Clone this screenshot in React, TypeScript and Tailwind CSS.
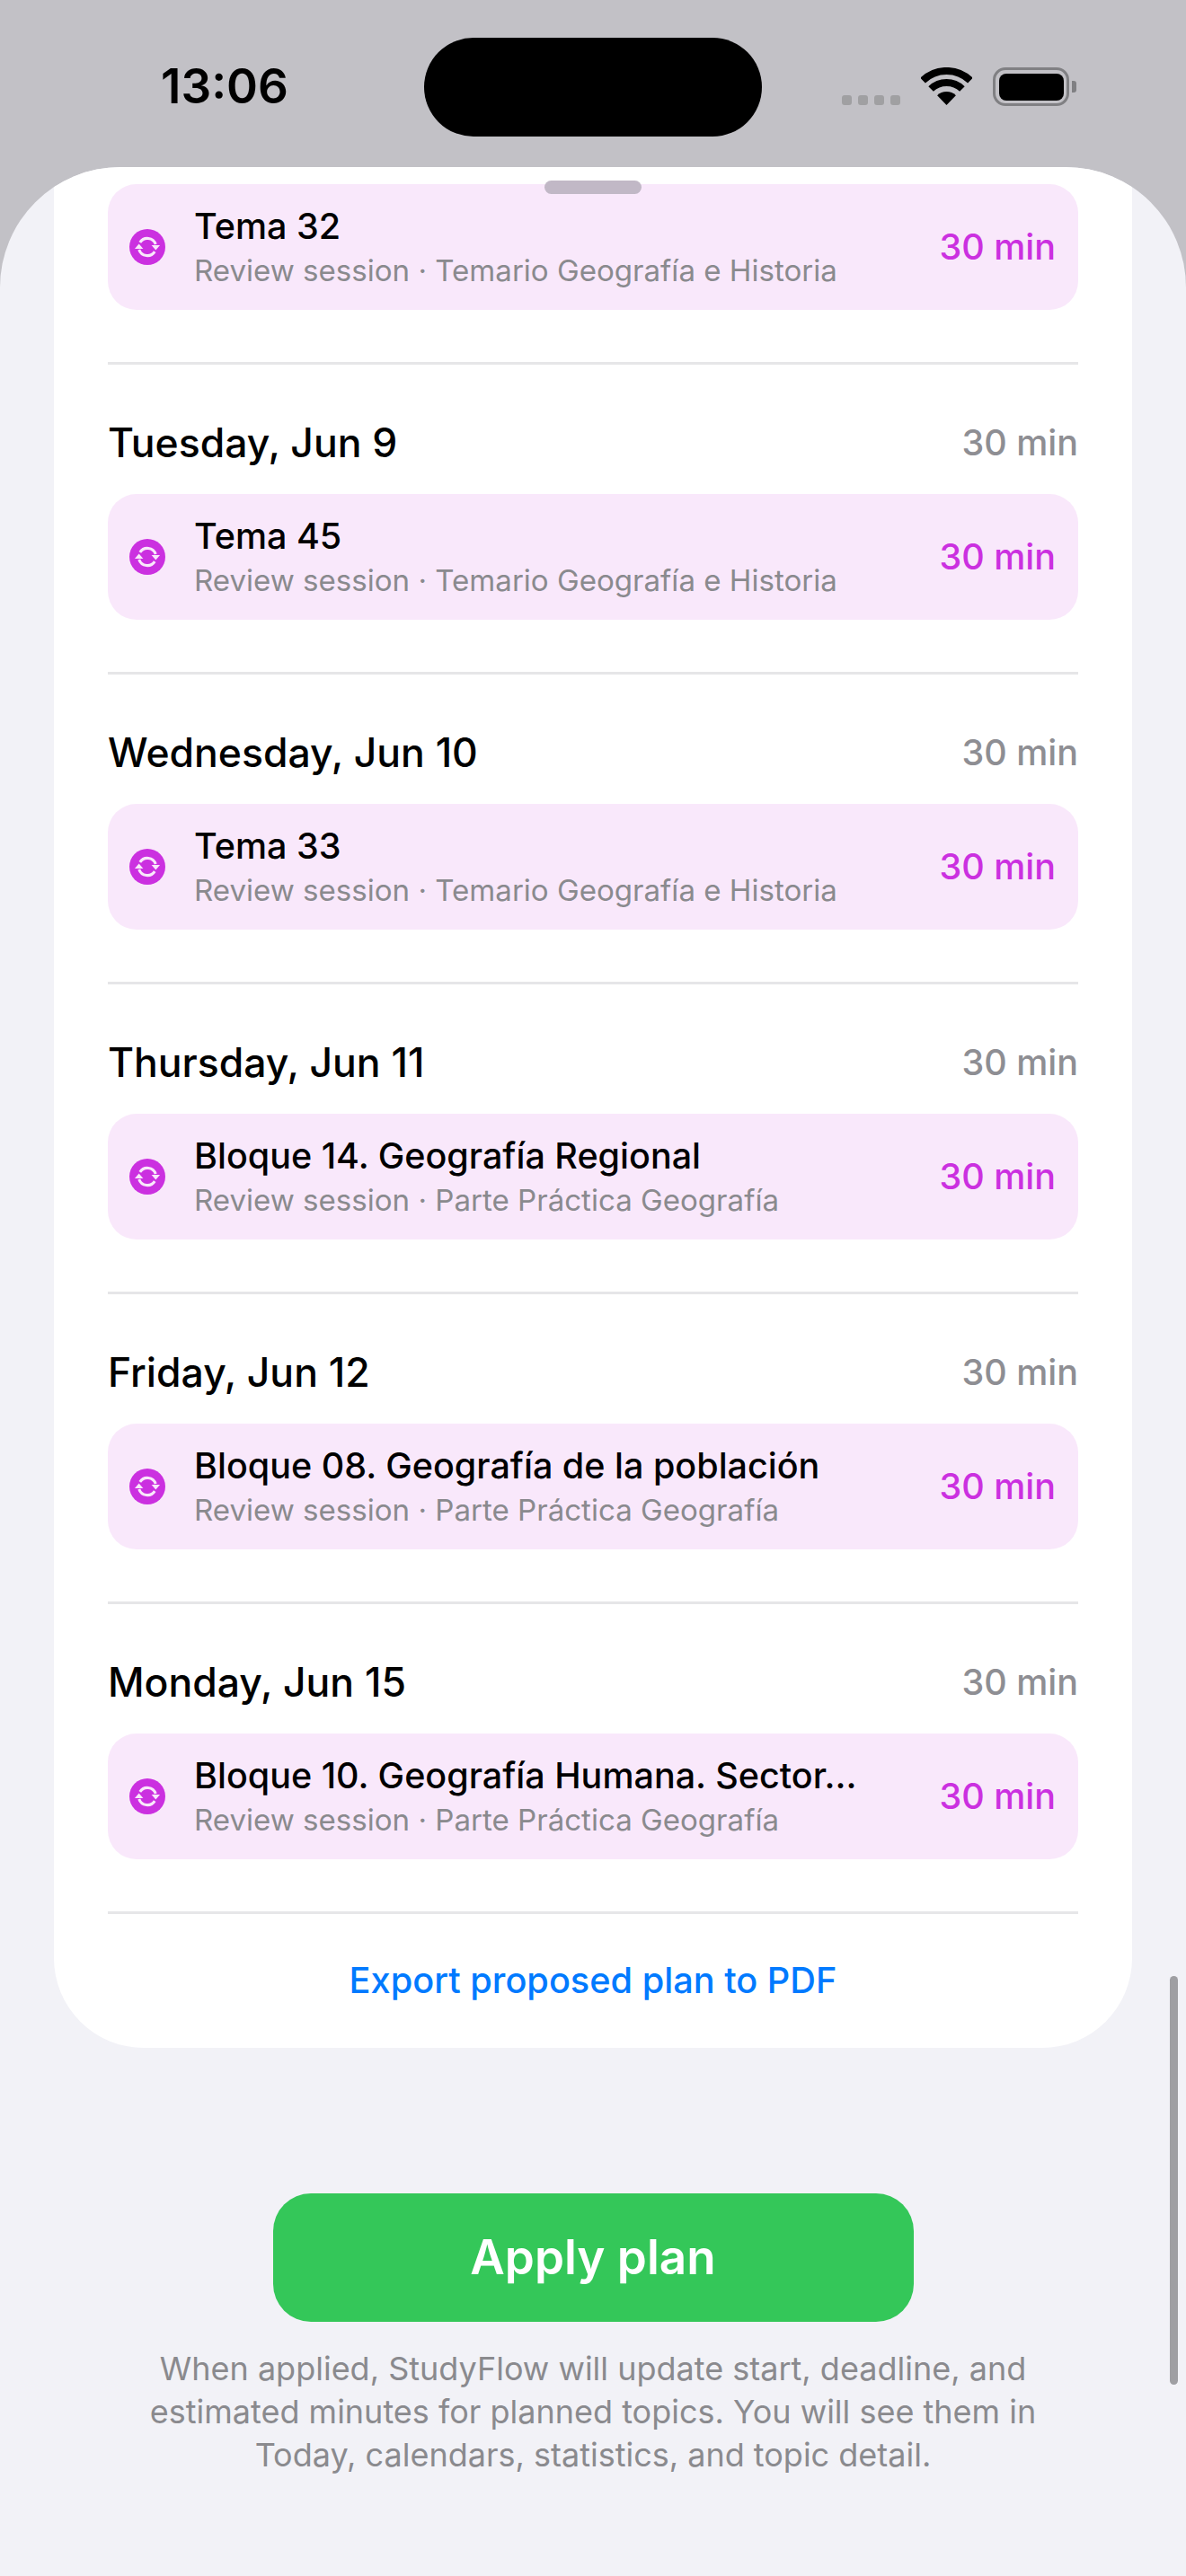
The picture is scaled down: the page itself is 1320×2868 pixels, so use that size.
const days = [
  { day: 'Tuesday, Jun 9', title: 'Tema 45', sub: 'Review session · Temario Geografía e Historia' },
  { day: 'Wednesday, Jun 10', title: 'Tema 33', sub: 'Review session · Temario Geografía e Historia' },
  { day: 'Thursday, Jun 11', title: 'Bloque 14. Geografía Regional', sub: 'Review session · Parte Práctica Geografía' },
  { day: 'Friday, Jun 12', title: 'Bloque 08. Geografía de la población', sub: 'Review session · Parte Práctica Geografía' },
  { day: 'Monday, Jun 15', title: 'Bloque 10. Geografía Humana. Sector...', sub: 'Review session · Parte Práctica Geografía' },
];

function ReviewIcon() {
  return (
    <svg width="40" height="40" viewBox="0 0 39 39" className="shrink-0">
      <circle cx="19.5" cy="19.5" r="19.5" fill="#cb30e0" />
      <g fill="none" stroke="#f9e8fb" strokeWidth="3">
        <path d="M11.5 14.5A9.5 9.5 0 0 1 28.5 16.5" />
        <path d="M27.5 24.5A9.5 9.5 0 0 1 10.5 22.5" />
      </g>
      <path d="M24 17.5H33.2L28.6 23Z" fill="#f9e8fb" />
      <path d="M5.8 21.5H15L10.4 16Z" fill="#f9e8fb" />
    </svg>
  );
}

function Session({ title, sub }: { title: string; sub: string }) {
  return (
    <div className="flex h-[140px] items-center rounded-[32px] bg-[#f9e8fb] pl-[24px] pr-[25px]">
      <ReviewIcon />
      <div className="ml-[32px] min-w-0 flex-1 pt-[2px]">
        <div className="h-[50px] truncate text-[39.5px] leading-[50px] font-medium text-black">{title}</div>
        <div className="h-[48px] truncate text-[33.1px] leading-[48px] text-[#8a8a8e]">{sub}</div>
      </div>
      <div className="ml-4 shrink-0 pt-[2px] text-[39.5px] font-medium text-[#cb30e0]">30 min</div>
    </div>
  );
}

function WifiIcon() {
  return (
    <svg width="57" height="42" viewBox="0 0 57 42">
      <g fill="none" stroke="#000" strokeWidth="8">
        <path d="M2.1 14.6A38 38 0 0 1 54.9 14.6" />
        <path d="M11.1 24A25 25 0 0 1 45.9 24" />
      </g>
      <path d="M28.5 42L18.1 31.2A15 15 0 0 1 38.9 31.2Z" fill="#000" />
    </svg>
  );
}

function StatusBar() {
  return (
    <div className="flex h-[186px] items-start pt-[42px]">
      <div className="ml-[179px] flex h-[110px] w-[293px] items-center text-[53px] font-semibold text-black">13:06</div>
      <div className="h-[110px] w-[376px] rounded-[55px] bg-black" />
      <div className="ml-[89px] mt-[64px] flex gap-[7px]">
        <div className="h-[11px] w-[11px] rounded-[3px] bg-[#a0a0a2]" />
        <div className="h-[11px] w-[11px] rounded-[3px] bg-[#a0a0a2]" />
        <div className="h-[11px] w-[11px] rounded-[3px] bg-[#a0a0a2]" />
        <div className="h-[11px] w-[11px] rounded-[3px] bg-[#a0a0a2]" />
      </div>
      <div className="ml-[23px] mt-[33px]">
        <WifiIcon />
      </div>
      <div className="ml-[23px] mt-[33px] flex items-center">
        <div className="h-[43px] w-[85px] rounded-[14px] border-[3.5px] border-[#808083] p-[3.5px]">
          <div className="h-full w-full rounded-[8px] bg-black" />
        </div>
        <div className="ml-[3px] h-[13px] w-[5px] rounded-r-[3px] bg-[#808083]" />
      </div>
    </div>
  );
}

export default function App() {
  return (
    <div className="h-[2868px] w-[1320px] overflow-hidden bg-[#c2c1c6] font-['Inter',sans-serif]">
      <StatusBar />

      <div className="relative h-[2682px] overflow-hidden rounded-t-[134px] bg-[#f2f2f7]">
        <div className="absolute left-[606px] top-[15px] h-[15px] w-[108px] rounded-full bg-[#c1b8c6]" />
        <div className="absolute left-[1302px] top-[2014px] h-[455px] w-[9px] rounded-full bg-[#9f9fa3]" />

        <div className="mx-[60px] rounded-b-[100px] bg-white px-[60px] pt-[19px]">
          <Session title="Tema 32" sub="Review session · Temario Geografía e Historia" />
          <div className="mt-[58px] border-b-[3px] border-[#e6e6e8]" />

          {days.map((d) => (
            <div key={d.day} className="border-b-[3px] border-[#e6e6e8] pb-[58px] pt-[60px]">
              <div className="mb-[30px] flex h-[54px] items-center justify-between">
                <span className="text-[44.5px] font-medium text-black">{d.day}</span>
                <span className="pt-[2px] text-[39.5px] font-medium text-[#8e8e93]">30 min</span>
              </div>
              <Session title={d.title} sub={d.sub} />
            </div>
          ))}

          <div className="flex h-[149px] items-center justify-center text-[39.7px] font-medium text-[#007aff]">
            Export proposed plan to PDF
          </div>
        </div>

        <div className="mx-auto mt-[162px] flex h-[143px] w-[713px] items-center justify-center rounded-[42px] bg-[#34c759] text-[53px] font-semibold text-white">
          Apply plan
        </div>

        <p className="mx-auto mt-[28px] w-[1020px] text-center text-[36px] leading-[48px] text-[#8a8a8e]">
          When applied, StudyFlow will update start, deadline, and estimated minutes for planned topics. You will see them in Today, calendars, statistics, and topic detail.
        </p>
      </div>
    </div>
  );
}
